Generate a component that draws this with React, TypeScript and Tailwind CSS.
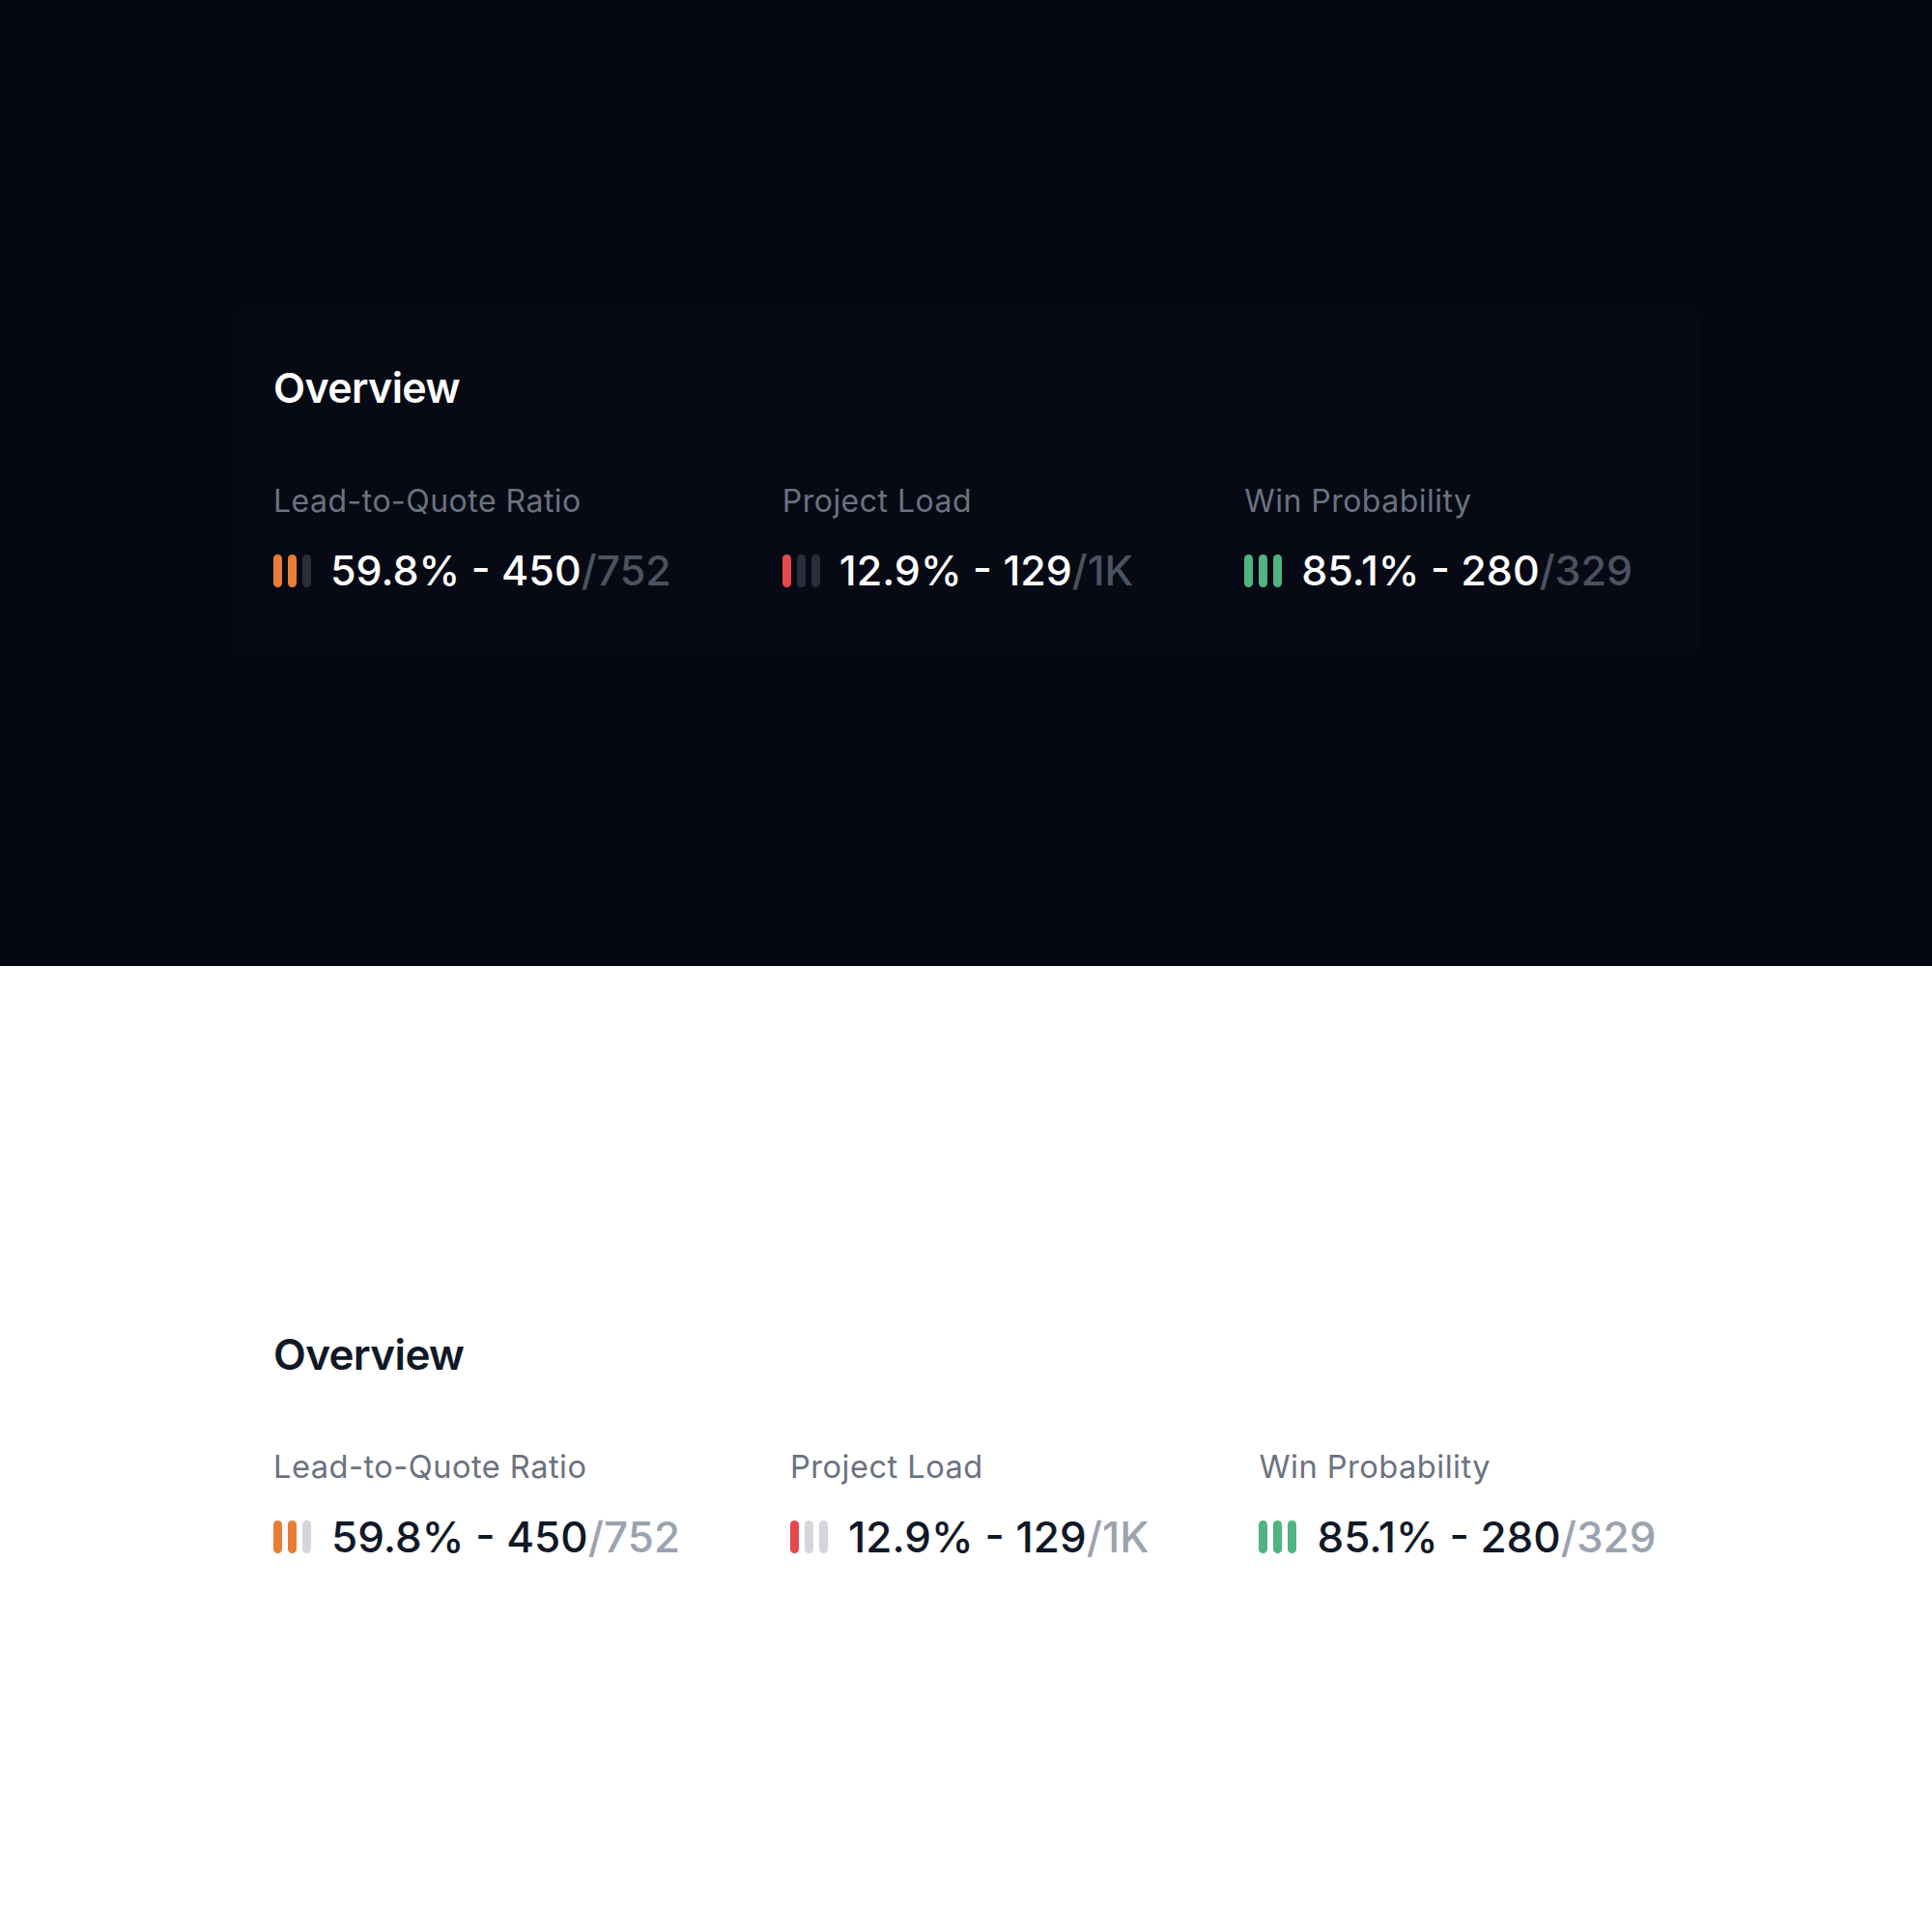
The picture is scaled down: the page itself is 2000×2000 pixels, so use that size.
const metrics = [
  { label: "Lead-to-Quote Ratio", pct: "59.8%", count: "450", total: "752", level: 2, color: "bg-[#ea7d36]" },
  { label: "Project Load", pct: "12.9%", count: "129", total: "1K", level: 1, color: "bg-[#e5484d]" },
  { label: "Win Probability", pct: "85.1%", count: "280", total: "329", level: 3, color: "bg-[#4fb47f]" },
];

const Bars = ({ level, color, dark }: { level: number; color: string; dark: boolean }) => (
  <div className="flex items-center gap-[6px]">
    {[1, 2, 3].map((i) => (
      <span
        key={i}
        className={`block w-[9px] h-[34px] rounded-full ${
          i <= level ? color : dark ? "bg-[#282e3a]" : "bg-[#d4d6db]"
        }`}
      />
    ))}
  </div>
);

const Overview = ({ dark }: { dark: boolean }) => (
  <div
    className={`w-[1522px] mx-auto rounded-[10px] pl-[44px] pt-[59px] pb-[65px] ${
      dark ? "bg-[#070a14]" : "bg-white"
    }`}
  >
    <h2
      className={`leading-none font-semibold tracking-[-0.015em] ${
        dark ? "text-[43px] text-white" : "text-[44px] text-[#111827]"
      }`}
    >
      Overview
    </h2>
    <div className={`flex ${dark ? "gap-[115px] mt-[80px]" : "gap-[114px] mt-[78px]"}`}>
      {metrics.map((m) => (
        <div key={m.label}>
          <div
            className={`leading-none tracking-[0.015em] text-[#6b7280] ${
              dark ? "text-[32px]" : "text-[32.6px]"
            }`}
          >
            {m.label}
          </div>
          <div className={`flex items-center mt-[34px] ${dark ? "gap-[20px]" : "gap-[21px]"}`}>
            <Bars level={m.level} color={m.color} dark={dark} />
            <div
              className={`leading-none font-medium ${
                dark ? "text-[43px] text-white" : "text-[44px] text-[#111827]"
              }`}
            >
              {m.pct} - {m.count}
              <span className={dark ? "text-[#4b5260]" : "text-[#9ca3af]"}>/{m.total}</span>
            </div>
          </div>
        </div>
      ))}
    </div>
  </div>
);

export default function App() {
  return (
    <div className="w-[2000px] font-['Inter',sans-serif]">
      <div className="h-[1000px] bg-[#040812] pt-[321px]">
        <Overview dark />
      </div>
      <div className="h-[1000px] bg-white pt-[321px]">
        <Overview dark={false} />
      </div>
    </div>
  );
}
